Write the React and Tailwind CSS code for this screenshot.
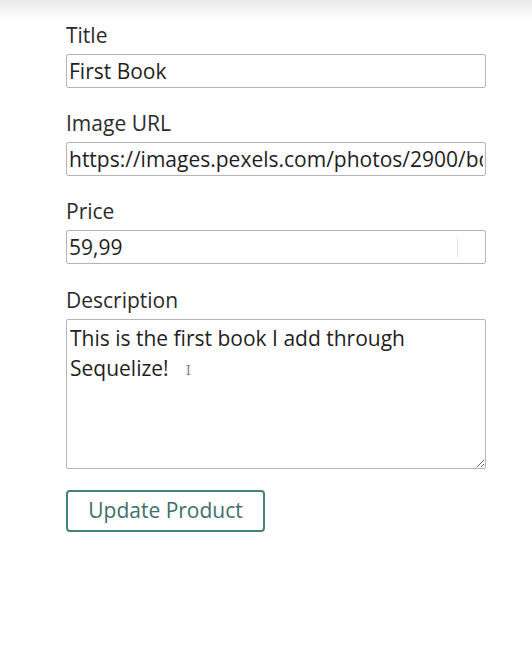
import React from "react";

function Field({ label, children, className = "" }) {
  return (
    <div className={"flex flex-col " + className}>
      <label className="text-[21px] leading-[26px] text-[#2b2b2b]">{label}</label>
      {children}
    </div>
  );
}

export default function App() {
  return (
    <div className="w-[532px] h-[657px] bg-white font-['Open_Sans',sans-serif] text-[#222] overflow-hidden">
      <div className="h-[20px] bg-gradient-to-b from-[#e9e9e9] to-white" />
      <form className="ml-[66px] w-[420px] flex flex-col">
        <Field label="Title" className="mt-[2px]">
          <input
            readOnly
            value="First Book"
            className="mt-[6px] h-[34px] border-[1.5px] border-[#b5b5b5] rounded-[2px] px-[2px] text-[21px] text-[#1f1f1f] outline-none"
          />
        </Field>
        <Field label="Image URL" className="mt-[22px]">
          <input
            readOnly
            value="https://images.pexels.com/photos/2900/books-bookstore-book-reading-159711.jpeg"
            className="mt-[6px] h-[34px] border-[1.5px] border-[#b5b5b5] rounded-[2px] px-[2px] text-[21px] text-[#1f1f1f] outline-none"
          />
        </Field>
        <Field label="Price" className="mt-[22px]">
          <div className="relative mt-[6px]">
            <input
              readOnly
              value="59,99"
              className="w-full h-[34px] border-[1.5px] border-[#b5b5b5] rounded-[2px] px-[2px] text-[21px] text-[#1f1f1f] outline-none"
            />
            <span className="absolute left-[391px] top-[8px] h-[19px] w-px bg-[#e2e2e2]" />
          </div>
        </Field>
        <Field label="Description" className="mt-[23px]">
          <div className="relative mt-[6px]">
            <textarea
              readOnly
              value="This is the first book I add through Sequelize!"
              className="block w-full h-[150px] border-[1.5px] border-[#b5b5b5] rounded-[2px] px-[3px] pt-[3px] text-[21px] leading-[30px] text-[#1f1f1f] outline-none resize-y"
            />
            <span className="absolute left-[120px] top-[46px] text-[12px] leading-none text-[#777] font-['DejaVu_Serif',serif]">I</span>
          </div>
        </Field>
        <div className="mt-[21px]">
          <button
            type="button"
            className="w-[199px] h-[42px] border-2 border-[#4a807a] rounded-[4px] text-[21px] text-[#3f6f6a] bg-white"
          >
            Update Product
          </button>
        </div>
      </form>
    </div>
  );
}
